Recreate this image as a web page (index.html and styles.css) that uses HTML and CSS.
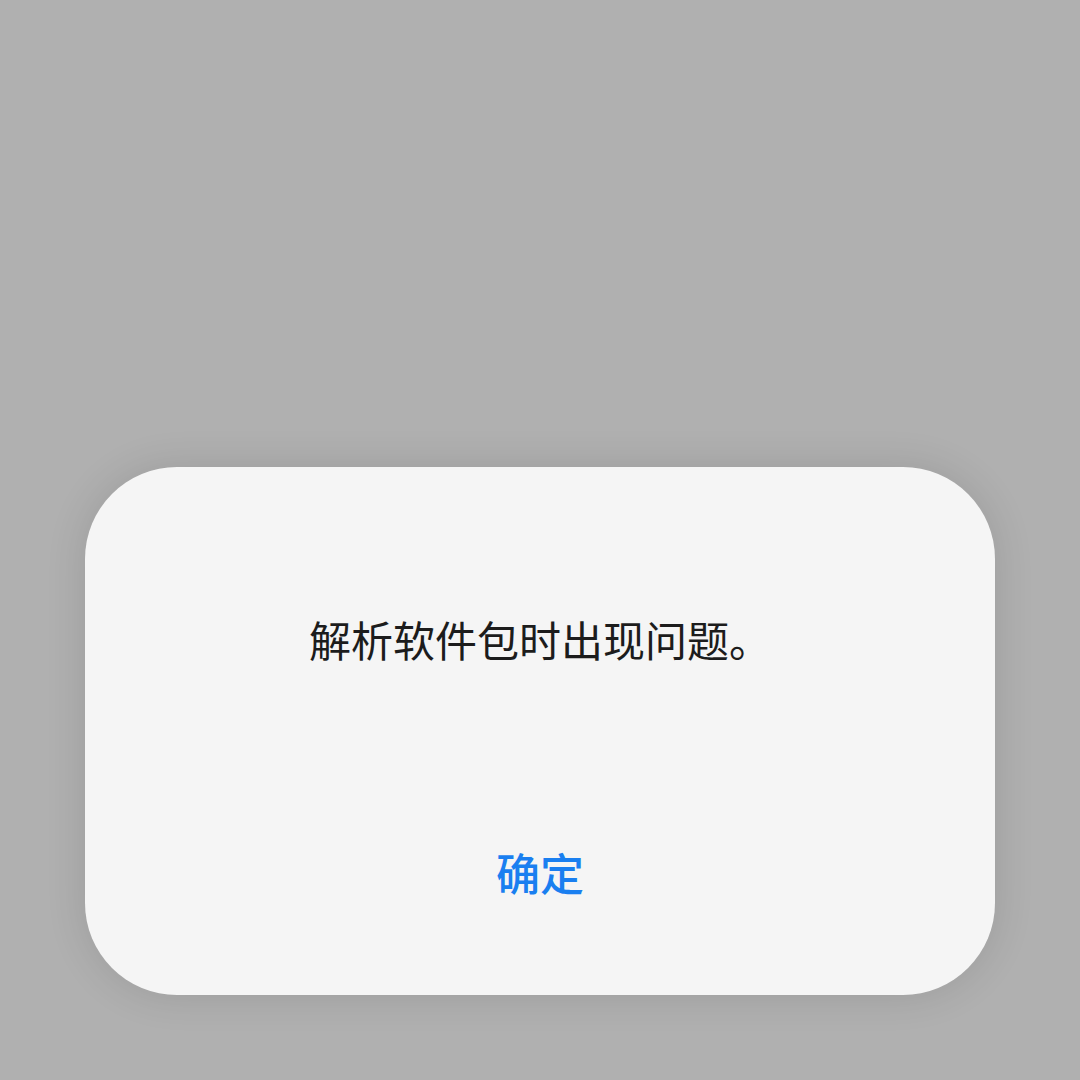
FILE: index.html
```html
<!DOCTYPE html>
<html lang="zh-CN">
<head>
    <title>解析错误</title>
    <meta charset="UTF-8">
    <link rel="stylesheet" href="styles.css">
</head>
<body>
    <div class="dialog">
        <p class="message">解析软件包时出现问题。</p>
        <button class="confirm">确定</button>
    </div>
</body>
</html>
```

FILE: styles.css
```css
html, body {
    height: 100%;
}

body {
    margin: 0;
    box-sizing: border-box;
    padding: 0 85px 85px;
    background: #b0b0b0;
    font-family: "Noto Sans CJK SC", "Noto Sans", sans-serif;
    display: flex;
    align-items: flex-end;
}

.dialog {
    flex: 1;
    display: flex;
    flex-direction: column;
    align-items: center;
    gap: 182px;
    padding: 147px 0 96px;
    background: #f5f5f5;
    border-radius: 92px;
    box-shadow: 0 0 40px rgba(0, 0, 0, 0.12);
}

.message {
    margin: 0;
    font-size: 42px;
    line-height: 1.2;
    color: #1c1c1c;
}

.confirm {
    background: none;
    border: none;
    padding: 0;
    font-family: inherit;
    font-size: 44px;
    font-weight: 500;
    line-height: 1.2;
    color: #1a7ff0;
    cursor: pointer;
}
```
